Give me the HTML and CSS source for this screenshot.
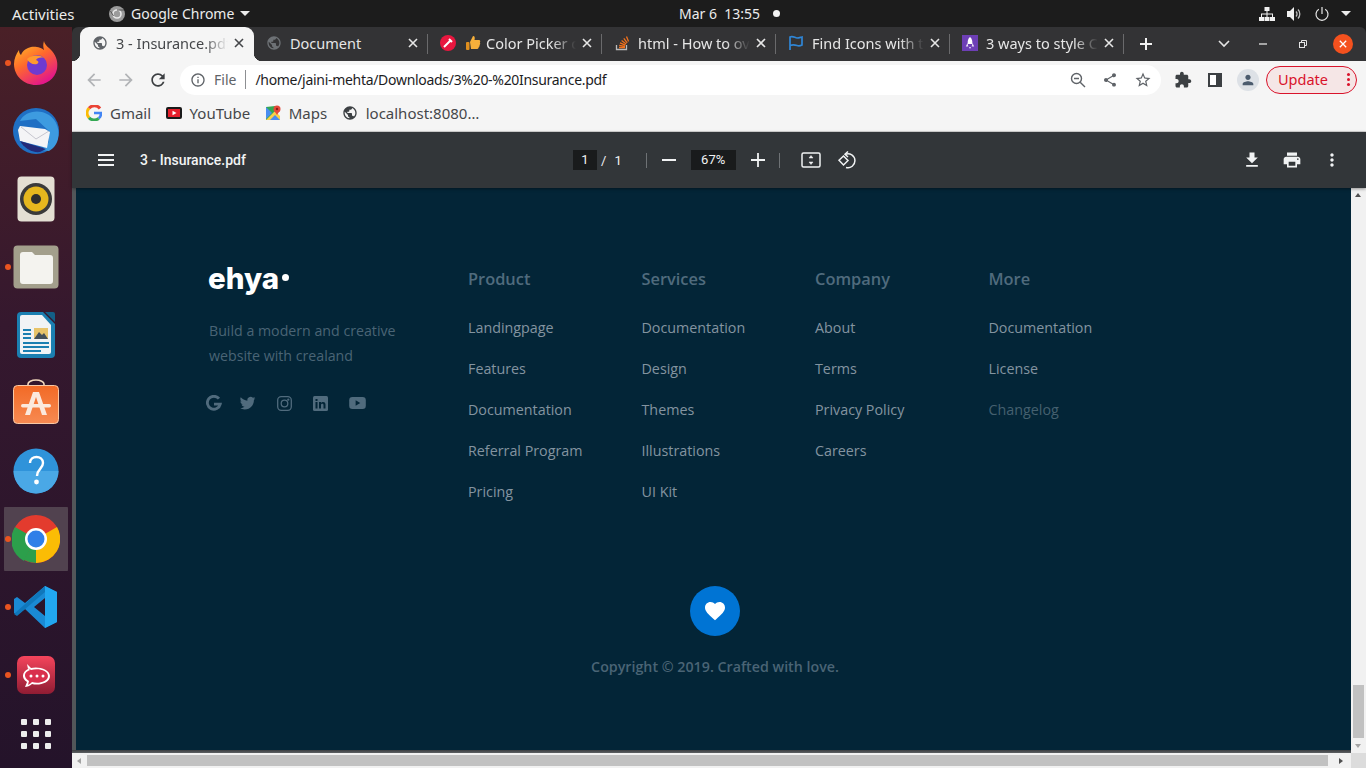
FILE: index.html
```html
<!DOCTYPE html>
<html>
<head>
	<meta charset="utf-8">
	<title>3 - Insurance.pdf</title>
	<link rel="stylesheet" href="styles.css">
</head>
<body>
	<!-- shared icons -->
	<svg class="sprite" width="0" height="0">
		<symbol id="globe" viewBox="0 0 24 24"><path d="M12 2C6.48 2 2 6.48 2 12s4.48 10 10 10 10-4.48 10-10S17.52 2 12 2zm-1 17.93c-3.95-.49-7-3.85-7-7.93 0-.62.08-1.21.21-1.79L9 15v1c0 1.1.9 2 2 2v1.93zm6.9-2.54c-.26-.81-1-1.39-1.9-1.39h-1v-3c0-.55-.45-1-1-1H8v-2h2c.55 0 1-.45 1-1V7h2c1.1 0 2-.9 2-2v-.41c2.93 1.19 5 4.06 5 7.41 0 2.08-.8 3.97-2.1 5.39z"/></symbol>
		<symbol id="close" viewBox="0 0 10 10"><path d="M1 1l8 8M9 1l-8 8" fill="none" stroke="currentColor" stroke-width="1.6"/></symbol>
	</svg>

	<div class="screen">
		<!-- Gnome top bar -->
		<div class="topbar">
			<div class="top-left">
				<span class="activities">Activities</span>
				<span class="app-menu">
					<svg width="16" height="16" viewBox="0 0 16 16"><circle cx="8" cy="8" r="8" fill="#9b9b9b"/><circle cx="8" cy="8" r="4" fill="none" stroke="#e8e8e8" stroke-width="1.6"/><path d="M8 4h7M4.500 10l-3-5" stroke="#555" stroke-width="1"/></svg>
					Google Chrome
					<i class="caret"></i>
				</span>
			</div>
			<div class="clock">Mar 6&nbsp; 13:55 <i class="clock-dot"></i></div>
			<div class="top-right">
				<svg width="16" height="14" viewBox="0 0 16 14" fill="#f0f0f0"><rect x="5.500" y="0" width="5" height="4"/><rect x="0" y="10" width="5" height="4"/><rect x="5.500" y="10" width="5" height="4"/><rect x="11" y="10" width="5" height="4"/><path d="M7.500 4h1v2.500H14V10h-1V7.500H8.500V10h-1V7.500H3V10H2V6.500h5.500z"/></svg>
				<svg width="16" height="14" viewBox="0 0 16 14"><path d="M0 4h3l4-4v14l-4-4H0z" fill="#f0f0f0"/><path d="M9 4.500a3.500 3.500 0 0 1 0 5M11 2.500a6.500 6.500 0 0 1 0 9" fill="none" stroke="#bdbdbd" stroke-width="1.300"/></svg>
				<svg width="14" height="14" viewBox="0 0 14 14" fill="none" stroke="#e8e8e8" stroke-width="1.200"><path d="M7 0v7"/><path d="M3.800 2.200a6 6 0 1 0 6.400 0"/></svg>
				<i class="caret"></i>
			</div>
		</div>

		<div class="desktop">
			<!-- Ubuntu dock -->
			<div class="dock">
				<div class="dock-item running">
					<svg width="46" height="46" viewBox="0 0 46 46">
						<defs>
							<linearGradient id="fx" x1="0" y1="0" x2="0.6" y2="1"><stop offset="0" stop-color="#ffc928"/><stop offset="0.5" stop-color="#ff6a2b"/><stop offset="1" stop-color="#e3178a"/></linearGradient>
						</defs>
						<path d="M31 1c1 5 5 6 8 10 5 6 6 12 5 18-2 10-11 16-21 16C11 45 1 36 1 24c0-5 2-10 5-14 0 3 1 4 2 5 2-5 6-7 10-8 5-1 11 1 13 3-1-3-1-6 0-9z" fill="url(#fx)"/>
						<circle cx="24" cy="25" r="10" fill="#6f3ad0"/>
						<path d="M14 19c4-4 12-5 17-1-4-1-7 0-8 2 3 1 3 3 1 4-4 1-8-1-10-5z" fill="#ff9a2e"/>
					</svg>
				</div>
				<div class="dock-item">
					<svg width="48" height="48" viewBox="0 0 48 48">
						<circle cx="24" cy="24" r="23" fill="#1f6fc4"/>
						<path d="M8 14C12 5 26 1 37 8c8 5 11 16 9 24-1 5-5 10-9 12l-8-1 8-8V24L24 12z" fill="#3d9be0"/>
						<path d="M8 19l25 3 5 3-3 16-27-7-2-11z" fill="#f4f4f6"/>
						<path d="M9 20l15 12 13-8" fill="none" stroke="#b9b9c4" stroke-width="0.800"/>
						<path d="M8 34l26 8-6 3c-8 1-16-4-20-11z" fill="#232a78"/>
					</svg>
				</div>
				<div class="dock-item">
					<svg width="38" height="46" viewBox="0 0 38 46">
						<rect x="0.500" y="0.500" width="37" height="45" rx="4" fill="#e4dfd3"/>
						<circle cx="19" cy="23" r="16" fill="#3a3a3a"/>
						<circle cx="19" cy="23" r="12.500" fill="#e6b71e"/>
						<circle cx="19" cy="23" r="5" fill="#2e2e2e"/>
					</svg>
				</div>
				<div class="dock-item running">
					<svg width="46" height="44" viewBox="0 0 46 44">
						<rect x="0.500" y="0.500" width="45" height="43" rx="4" fill="#a39f8c"/>
						<path d="M7 10a3 3 0 0 1 3-3h9l3 3h15a3 3 0 0 1 3 3v23a3 3 0 0 1-3 3H10a3 3 0 0 1-3-3z" fill="#f4f3ef"/>
					</svg>
				</div>
				<div class="dock-item">
					<svg width="38" height="46" viewBox="0 0 38 46">
						<path d="M4 0h22l12 12v30a4 4 0 0 1-4 4H4a4 4 0 0 1-4-4V4a4 4 0 0 1 4-4z" fill="#1b7fb1"/>
						<path d="M5 3h20l9 10v27a2 2 0 0 1-2 2H5a2 2 0 0 1-2-2V5a2 2 0 0 1 2-2z" fill="#f1f3f5"/>
						<path d="M28 0l10 10V2a2 2 0 0 0-2-2z" fill="#135f87"/>
						<path d="M6 17h8v2H6zm0 4h8v2H6zm0 4h8v2H6zm0 5h26v2H6zm0 4h26v2H6zm0 4h18v2H6z" fill="#1b7fb1"/>
						<rect x="17" y="16" width="14" height="11" fill="#e8c46a"/>
						<path d="M17 27l5-7 3 3 2-2 4 6z" fill="#43505a"/>
					</svg>
				</div>
				<div class="dock-item">
					<svg width="46" height="48" viewBox="0 2 46 48">
						<defs>
							<linearGradient id="soft" x1="0" y1="0" x2="0" y2="1"><stop offset="0" stop-color="#f26a26"/><stop offset="1" stop-color="#f78a52"/></linearGradient>
						</defs>
						<path d="M15 9V7a8 4 0 0 1 16 0v2" fill="none" stroke="#f3d9bd" stroke-width="1.600"/>
						<rect x="0.500" y="8.500" width="45" height="38" rx="4" fill="url(#soft)" stroke="#f8c9a6" stroke-width="1"/>
						<path d="M20 15h6l8 23h-5l-6-18-6 18h-5z" fill="#fbe9dd"/>
						<rect x="8" y="27" width="30" height="3.500" rx="1.700" fill="#fbe9dd"/>
					</svg>
				</div>
				<div class="dock-item">
					<svg width="46" height="46" viewBox="0 0 46 46">
						<circle cx="23" cy="23" r="22.500" fill="#2f93da"/>
						<path d="M.5 23a22.500 22.500 0 0 0 45 0z" fill="#4aa8e6"/>
						<path d="M17 15c0-8 13-8 13 0 0 6-6 6-6 13" fill="none" stroke="#fff" stroke-width="2.400"/>
						<circle cx="23.500" cy="34" r="2.400" fill="#fff"/>
					</svg>
				</div>
				<div class="dock-item running active">
					<svg width="48" height="48" viewBox="0 0 48 48">
						<circle cx="24" cy="24" r="24" fill="#e33b2e"/>
						<path d="M24 24L45 12a24 24 0 0 1-21 36z" fill="#fbbc05"/>
						<path d="M24 24l-12 22A24 24 0 0 1 3 12z" fill="#2c9f4b"/>
						<path d="M24 24L24 48a24 24 0 0 1-12-3.200z" fill="#2c9f4b"/>
						<circle cx="24" cy="24" r="11" fill="#fff"/>
						<circle cx="24" cy="24" r="8.500" fill="#2f7fe8"/>
					</svg>
				</div>
				<div class="dock-item running">
					<svg width="44" height="44" viewBox="0 0 44 44">
						<path d="M31 1l12 6v30l-12 6-20-19-8 6-3-2v-14l3-2 8 6zm0 12L20 22l11 9z" fill="#1a8ad4"/>
						<path d="M31 1l12 6v30l-12 6z" fill="#22a7f0"/>
						<path d="M0 29l3 2 28-24V1z" fill="#0f77bb"/>
					</svg>
				</div>
				<div class="dock-item running">
					<svg width="38" height="38" viewBox="0 0 38 38">
						<defs>
							<linearGradient id="rc" x1="0" y1="0" x2="0" y2="1"><stop offset="0" stop-color="#f5455c"/><stop offset="1" stop-color="#8f1c33"/></linearGradient>
						</defs>
						<rect width="38" height="38" rx="7" fill="url(#rc)"/>
						<path d="M10 8l4 4c7-2 19 1 19 8s-11 10-18 8c-2 2-5 3-7 3l2-5c-6-4-5-10 1-13z" fill="#fff"/>
						<path d="M11 12l3 2c7-2 17 0 17 6s-10 8-16 6c-2 2-3 2-4 3l1-4c-6-4-5-9 1-11z" fill="#d9304d"/>
						<circle cx="14" cy="20" r="1.500" fill="#fff"/><circle cx="20" cy="20" r="1.500" fill="#fff"/><circle cx="26" cy="20" r="1.500" fill="#fff"/>
					</svg>
				</div>
				<div class="dock-grid">
					<i></i><i></i><i></i><i></i><i></i><i></i><i></i><i></i><i></i>
				</div>
			</div>

			<div class="window">
				<!-- Tabs -->
				<div class="tabstrip">
					<div class="tab active">
						<svg class="fav" width="16" height="16" fill="#5f6368"><use href="#globe"/></svg>
						<span class="tab-title">3 - Insurance.pdf</span>
						<svg class="tab-x" width="10" height="10"><use href="#close"/></svg>
					</div>
					<div class="tab">
						<svg class="fav" width="16" height="16" fill="#6d7175"><use href="#globe"/></svg>
						<span class="tab-title">Document</span>
						<svg class="tab-x" width="10" height="10"><use href="#close"/></svg>
					</div>
					<div class="tab">
						<svg class="fav" width="16" height="16" viewBox="0 0 16 16"><circle cx="8" cy="8" r="8" fill="#e8173f"/><path d="M4 12l6-6M9 4l3 3" stroke="#fff" stroke-width="2"/></svg>
						<svg class="thumb" width="16" height="16" viewBox="0 0 16 16"><path d="M5 7l3-6c2 0 2 2 1.500 4H14c1.500 0 1.500 2 .8 2.500.7.800.5 2-.3 2.500.4.800 0 1.800-.8 2.100.2 1-.5 1.900-1.500 1.900H6z" fill="#f7b03b"/><rect x="1" y="7" width="3.500" height="8" rx="1" fill="#e08f1e"/></svg>
						<span class="tab-title">Color Picker o</span>
						<svg class="tab-x" width="10" height="10"><use href="#close"/></svg>
					</div>
					<div class="tab">
						<svg class="fav" width="16" height="16" viewBox="0 0 16 16" fill="none"><path d="M2.500 10v4.500h10V10" stroke="#bcbbbb" stroke-width="1.300"/><path d="M5 12.500h6M5.200 10.300l5.800 1.100M6 7.800l5.400 2.400M7.600 5.400l4.600 3.500M9.800 3.300l3.400 4.500M12.500 1.500l2 5" stroke="#f2711c" stroke-width="1.300"/></svg>
						<span class="tab-title">html - How to ov</span>
						<svg class="tab-x" width="10" height="10"><use href="#close"/></svg>
					</div>
					<div class="tab">
						<svg class="fav" width="16" height="16" viewBox="0 0 16 16" fill="none" stroke="#2f86d6" stroke-width="1.700"><path d="M2 15V2c3-1.500 5 1 7 1s3-.5 5-1v8c-2 1-3.500 1-5 .5S4.500 9.500 2 10.500"/></svg>
						<span class="tab-title">Find Icons with t</span>
						<svg class="tab-x" width="10" height="10"><use href="#close"/></svg>
					</div>
					<div class="tab tab-end">
						<svg class="fav" width="16" height="16" viewBox="0 0 16 16"><rect width="16" height="16" fill="#6d3fb5"/><path d="M8 2c2 1.500 2.500 4 2.300 7H5.700C5.500 6 6 3.500 8 2z" fill="#fff"/><path d="M5.500 8L3.800 11.500h2.500zM10.500 8l1.700 3.500H9.700zM7 12h2l-1 2z" fill="#eadff7"/></svg>
						<span class="tab-title">3 ways to style C</span>
						<svg class="tab-x" width="10" height="10"><use href="#close"/></svg>
					</div>
					<svg class="newtab" width="12" height="12" viewBox="0 0 12 12"><path d="M6 0v12M0 6h12" stroke="#f2f2f2" stroke-width="2"/></svg>
					<div class="win-controls">
						<svg width="12" height="8" viewBox="0 0 12 8" fill="none" stroke="#e4e4e4" stroke-width="1.600"><path d="M1 1l5 5 5-5"/></svg>
						<svg class="win-min" width="8" height="2" viewBox="0 0 8 2"><path d="M0 1h8" stroke="#e4e4e4" stroke-width="1.300"/></svg>
						<svg class="win-max" width="8" height="8" viewBox="0 0 8 8" fill="none" stroke="#e4e4e4"><rect x="0.500" y="2.500" width="5" height="5"/><path d="M2.500 2.500v-2h5v5h-2"/></svg>
						<span class="win-close"><svg width="8" height="8"><use href="#close"/></svg></span>
					</div>
				</div>

				<!-- Toolbar -->
				<div class="toolbar">
					<svg class="nav-icon" width="20" height="20" viewBox="0 0 24 24" fill="#b1b3b6"><path d="M20 11H7.830l5.590-5.590L12 4l-8 8 8 8 1.410-1.410L7.830 13H20v-2z"/></svg>
					<svg class="nav-icon" width="20" height="20" viewBox="0 0 24 24" fill="#b1b3b6"><path d="M12 4l-1.410 1.410L16.170 11H4v2h12.170l-5.580 5.590L12 20l8-8z"/></svg>
					<svg class="nav-icon" width="20" height="20" viewBox="0 0 24 24" fill="#3c3f42"><path d="M17.650 6.350C16.200 4.900 14.210 4 12 4c-4.420 0-7.990 3.580-7.990 8s3.570 8 7.990 8c3.730 0 6.840-2.550 7.730-6h-2.080c-.82 2.330-3.040 4-5.650 4-3.310 0-6-2.690-6-6s2.690-6 6-6c1.660 0 3.140.69 4.220 1.780L13 11h7V4l-2.350 2.350z"/></svg>
					<div class="omnibox">
						<svg width="16" height="16" viewBox="0 0 24 24" fill="#5f6368"><path d="M11 7h2v2h-2zm0 4h2v6h-2zm1-9C6.480 2 2 6.480 2 12s4.480 10 10 10 10-4.480 10-10S17.520 2 12 2zm0 18c-4.410 0-8-3.590-8-8s3.590-8 8-8 8 3.590 8 8-3.590 8-8 8z"/></svg>
						<span class="scheme">File</span>
						<span class="url">/home/jaini-mehta/Downloads/3%20-%20Insurance.pdf</span>
						<div class="omni-icons">
							<svg width="16" height="16" viewBox="0 0 16 16" fill="none" stroke="#5f6368" stroke-width="1.400"><circle cx="6.500" cy="6.500" r="5"/><path d="M10.200 10.200L15 15M4 6.500h5"/></svg>
							<svg width="16" height="16" viewBox="0 0 24 24" fill="#5f6368"><path d="M18 16.080c-.76 0-1.440.3-1.960.77L8.910 12.700c.05-.23.09-.46.09-.7s-.04-.47-.09-.7l7.050-4.110c.54.5 1.250.81 2.040.81 1.660 0 3-1.340 3-3s-1.340-3-3-3-3 1.340-3 3c0 .24.04.47.09.7L8.040 9.810C7.500 9.310 6.790 9 6 9c-1.660 0-3 1.340-3 3s1.340 3 3 3c.79 0 1.500-.31 2.040-.81l7.120 4.160c-.05.21-.08.43-.08.65 0 1.610 1.310 2.920 2.920 2.920 1.610 0 2.920-1.310 2.920-2.920s-1.310-2.920-2.920-2.920z"/></svg>
							<svg width="18" height="18" viewBox="0 0 24 24" fill="#5f6368"><path d="M22 9.240l-7.190-.62L12 2 9.190 8.630 2 9.240l5.460 4.730L5.820 21 12 17.270 18.180 21l-1.630-7.030L22 9.240zM12 15.400l-3.760 2.270 1-4.280-3.320-2.880 4.380-.38L12 6.100l1.710 4.040 4.380.38-3.320 2.880 1 4.280L12 15.400z"/></svg>
						</div>
					</div>
					<svg class="ext" width="18" height="18" viewBox="0 0 24 24" fill="#3c4043"><path d="M20.500 11H19V7c0-1.100-.9-2-2-2h-4V3.500C13 2.120 11.880 1 10.500 1S8 2.120 8 3.500V5H4c-1.100 0-1.990.9-1.990 2v3.800H3.500c1.490 0 2.700 1.210 2.700 2.700s-1.210 2.700-2.700 2.700H2V20c0 1.100.9 2 2 2h3.800v-1.500c0-1.490 1.210-2.700 2.700-2.700 1.490 0 2.700 1.210 2.700 2.700V22H17c1.100 0 2-.9 2-2v-4h1.500c1.380 0 2.500-1.120 2.500-2.500S21.880 11 20.500 11z"/></svg>
					<svg class="side" width="14" height="14" viewBox="0 0 14 14"><rect x="1" y="1" width="12" height="12" fill="#fff" stroke="#3c4043" stroke-width="2"/><rect x="8" y="1" width="5" height="12" fill="#3c4043"/></svg>
					<span class="avatar"><svg width="16" height="16" viewBox="0 0 24 24" fill="#4c5c6e"><path d="M12 12c2.210 0 4-1.790 4-4s-1.790-4-4-4-4 1.790-4 4 1.790 4 4 4zm0 2c-2.670 0-8 1.340-8 4v2h16v-2c0-2.660-5.330-4-8-4z"/></svg></span>
					<span class="update">Update <i class="update-dots"></i></span>
				</div>

				<!-- Bookmarks -->
				<div class="bookmarks">
					<span class="bookmark">
						<svg width="16" height="16" viewBox="0 0 16 16" fill="none" stroke-width="3"><path d="M14 3.500A7 7 0 0 0 3 3.300" stroke="#ea4335"/><path d="M3 3.300a7 7 0 0 0 0 9.400" stroke="#fbbc05"/><path d="M3 12.700a7 7 0 0 0 9.700.6" stroke="#34a853"/><path d="M12.700 13.300A6.500 6.500 0 0 0 15 8H8" stroke="#4285f4" stroke-width="2.600"/></svg>
						Gmail
					</span>
					<span class="bookmark">
						<svg width="16" height="12" viewBox="0 0 16 12"><rect width="16" height="12" rx="2" fill="#1a1a1a"/><rect x="2" y="2" width="12" height="8" fill="#e5202c"/><path d="M6.500 3.800L10.500 6l-4 2.200z" fill="#fff"/></svg>
						YouTube
					</span>
					<span class="bookmark">
						<svg width="16" height="16" viewBox="0 0 16 16"><path d="M1 2l9-1v14H1z" fill="#34a853"/><path d="M1 15L10 6l5 5v4z" fill="#f9d04a"/><path d="M1 2l6 6-6 6z" fill="#4a8df0"/><path d="M5 15l5-5 5 5z" fill="#4a8df0"/><circle cx="12" cy="4" r="3.500" fill="#e5493a"/><path d="M9.500 6l2.500 4 2.500-4z" fill="#e5493a"/><circle cx="12" cy="4" r="1.200" fill="#8f1c16"/></svg>
						Maps
					</span>
					<span class="bookmark">
						<svg width="16" height="16" fill="#3c4043"><use href="#globe"/></svg>
						localhost:8080…
					</span>
				</div>

				<!-- PDF viewer toolbar -->
				<div class="pdfbar">
					<div class="pdf-left">
						<svg width="16" height="12" viewBox="0 0 16 12" fill="#f1f3f4"><rect width="16" height="2"/><rect y="5" width="16" height="2"/><rect y="10" width="16" height="2"/></svg>
						<span class="pdf-title">3 - Insurance.pdf</span>
					</div>
					<div class="pdf-center">
						<span class="pdf-page">1</span>
						<span class="pdf-of">/</span>
						<span class="pdf-total">1</span>
						<i class="pdf-sep"></i>
						<svg width="14" height="14" viewBox="0 0 14 14"><path d="M0 7h14" stroke="#f1f3f4" stroke-width="2"/></svg>
						<span class="pdf-zoom">67%</span>
						<svg width="14" height="14" viewBox="0 0 14 14"><path d="M0 7h14M7 0v14" stroke="#f1f3f4" stroke-width="1.800"/></svg>
						<i class="pdf-sep pdf-sep-last"></i>
						<svg class="pdf-fit" width="20" height="16" viewBox="0 0 20 16" fill="none" stroke="#f1f3f4" stroke-width="1.500"><rect x="1" y="1" width="18" height="14" rx="1.500"/><path d="M8 6l2-2.500L12 6zM8 10l2 2.500 2-2.500z" fill="#f1f3f4" stroke-width="0.500"/></svg>
						<svg class="pdf-rotate" width="18" height="18" viewBox="0 0 18 18" fill="none" stroke="#f1f3f4" stroke-width="1.500"><path d="M1 9.200l4.500-4.200 4.500 4.500-4.500 4.500z"/><path d="M7.500 3.200a7 7 0 1 1 .5 13.300"/><path d="M10 .5L7 3.300l3 2.700"/></svg>
					</div>
					<div class="pdf-right">
						<svg width="20" height="20" viewBox="0 0 24 24" fill="#f1f3f4"><path d="M19 9h-4V3H9v6H5l7 7 7-7zM5 18v2h14v-2H5z"/></svg>
						<svg width="20" height="20" viewBox="0 0 24 24" fill="#f1f3f4"><path d="M19 8H5c-1.660 0-3 1.340-3 3v6h4v4h12v-4h4v-6c0-1.660-1.340-3-3-3zm-3 11H8v-5h8v5zm3-7c-.55 0-1-.45-1-1s.45-1 1-1 1 .45 1 1-.45 1-1 1zm-1-9H6v4h12V3z"/></svg>
						<svg width="20" height="20" viewBox="0 0 24 24" fill="#f1f3f4"><path d="M12 8c1.100 0 2-.9 2-2s-.9-2-2-2-2 .9-2 2 .9 2 2 2zm0 2c-1.100 0-2 .9-2 2s.9 2 2 2 2-.9 2-2-.9-2-2-2zm0 6c-1.100 0-2 .9-2 2s.9 2 2 2 2-.9 2-2-.9-2-2-2z"/></svg>
					</div>
				</div>

				<!-- The pdf page -->
				<div class="viewer">
					<div class="gutter">
						<div class="page">
							<div class="page-columns">
								<div class="brand">
									<div class="logo">ehya<i class="logo-dot"></i></div>
									<p class="brand-text">Build a modern and creative website with crealand</p>
									<div class="social">
										<svg width="16" height="16" viewBox="0 0 18 18" fill="none" stroke="#506b7d" stroke-width="3.200"><path d="M14.600 4.200A7.300 7.300 0 1 0 16 10.300H9"/></svg>
										<svg class="social-bird" width="17" height="15" viewBox="0 0 24 22" fill="#506b7d"><path d="M23.500 3.300c-.8.400-1.700.6-2.700.8 1-.6 1.700-1.500 2.100-2.600-.9.500-1.900.9-3 1.100a4.700 4.700 0 0 0-8 4.300C8 6.700 4.500 4.800 2.100 2c-1.200 2.100-.6 4.900 1.500 6.300-.8 0-1.500-.2-2.100-.6 0 2.300 1.600 4.200 3.800 4.700-.7.200-1.400.2-2.100.1.600 1.900 2.300 3.200 4.400 3.300A9.500 9.500 0 0 1 .6 17.700a13.400 13.400 0 0 0 7.300 2.100c8.800 0 13.800-7.400 13.500-14.100.9-.7 1.700-1.500 2.100-2.400z"/></svg>
										<svg width="15" height="15" viewBox="0 0 15 15" fill="none" stroke="#506b7d" stroke-width="1.300"><rect x="0.700" y="0.700" width="13.600" height="13.600" rx="3.500"/><circle cx="7.500" cy="7.500" r="3.300"/><circle cx="11.300" cy="3.700" r="0.500"/></svg>
										<svg width="15" height="15" viewBox="0 0 15 15"><rect width="15" height="15" rx="1.500" fill="#506b7d"/><path d="M2.500 6h2v6.500h-2zM2.500 3h2v2h-2zM6 6h2v1c1-1.500 4.500-1.700 4.500 1.500v4h-2V9c0-1.600-2.500-1.600-2.500 0v3.500H6z" fill="#032537"/></svg>
										<svg width="17" height="12" viewBox="0 0 18 13"><rect width="18" height="13" rx="3.500" fill="#506b7d"/><path d="M7 3.500l5 3-5 3z" fill="#032537"/></svg>
									</div>
								</div>
								<div class="link-col">
									<h4>Product</h4>
									<ul>
										<li>Landingpage</li>
										<li>Features</li>
										<li>Documentation</li>
										<li>Referral Program</li>
										<li>Pricing</li>
									</ul>
								</div>
								<div class="link-col">
									<h4>Services</h4>
									<ul>
										<li>Documentation</li>
										<li>Design</li>
										<li>Themes</li>
										<li>Illustrations</li>
										<li>UI Kit</li>
									</ul>
								</div>
								<div class="link-col">
									<h4>Company</h4>
									<ul>
										<li>About</li>
										<li>Terms</li>
										<li>Privacy Policy</li>
										<li>Careers</li>
									</ul>
								</div>
								<div class="link-col">
									<h4>More</h4>
									<ul>
										<li>Documentation</li>
										<li>License</li>
										<li class="dim">Changelog</li>
									</ul>
								</div>
							</div>
							<div class="love">
								<span class="love-badge">
									<svg width="24" height="24" viewBox="0 0 24 24" fill="#fff"><path d="M12 21.350l-1.450-1.320C5.400 15.360 2 12.280 2 8.500 2 5.420 4.420 3 7.500 3c1.740 0 3.410.81 4.500 2.090C13.090 3.810 14.760 3 16.500 3 19.580 3 22 5.420 22 8.500c0 3.780-3.400 6.860-8.550 11.540L12 21.350z"/></svg>
								</span>
								<p class="copyright">Copyright © 2019. Crafted with love.</p>
							</div>
						</div>
					</div>
					<div class="vscroll">
						<i class="arrow-up"></i>
						<i class="vthumb"></i>
						<i class="arrow-down"></i>
					</div>
				</div>
				<div class="hscroll">
					<i class="arrow-left"></i>
					<i class="hthumb"></i>
					<i class="arrow-right"></i>
					<i class="corner"></i>
				</div>
			</div>
		</div>
	</div>
</body>
</html>
```

FILE: styles.css
```css
* {
	box-sizing: border-box;
}

body {
	margin: 0;
	font-family: "Noto Sans", sans-serif;
	background-color: #1c1c1c;
	overflow: hidden;
}

i {
	display: block;
}

svg {
	display: block;
	flex: none;
}

.sprite {
	position: absolute;
}

.screen {
	width: 1366px;
	height: 768px;
	display: flex;
	flex-direction: column;
	overflow: hidden;
}

/*Top bar*/
.topbar {
	height: 27px;
	flex: none;
	display: flex;
	align-items: center;
	position: relative;
	background-color: #1c1c1c;
	color: #ececec;
	font-size: 14px;
}

.top-left {
	display: flex;
	align-items: center;
	padding-left: 12px;
}

.activities {
	width: 97px;
	font-size: 15px;
}

.app-menu {
	display: flex;
	align-items: center;
	gap: 6px;
}

.caret {
	width: 0;
	height: 0;
	border-left: 5px solid transparent;
	border-right: 5px solid transparent;
	border-top: 5px solid #ececec;
}

.clock {
	position: absolute;
	left: 679px;
	top: 0;
	height: 27px;
	display: flex;
	align-items: center;
	gap: 9px;
	white-space: pre;
}

.clock-dot {
	width: 7px;
	height: 7px;
	border-radius: 50%;
	background-color: #f2f2f2;
}

.top-right {
	margin-left: auto;
	display: flex;
	align-items: center;
	gap: 12px;
	padding-right: 15px;
}

/*Dock and window*/
.desktop {
	flex: 1;
	min-height: 0;
	display: flex;
}

.dock {
	width: 72px;
	flex: none;
	padding-top: 2px;
	display: flex;
	flex-direction: column;
	background: linear-gradient(#4a2027, #35182e 40%, #24132a);
}

.dock-item {
	height: 68px;
	width: 64px;
	margin-left: 4px;
	flex: none;
	display: flex;
	align-items: center;
	justify-content: center;
	position: relative;
}

.dock-item.active {
	background: linear-gradient(#51424f, #51424f) center / 100% 64px no-repeat;
	border-radius: 4px;
}

.dock-item.running::before {
	content: "";
	position: absolute;
	left: 1px;
	top: 31px;
	width: 6px;
	height: 6px;
	border-radius: 50%;
	background-color: #e95420;
}

.dock-grid {
	display: grid;
	grid-template-columns: repeat(3, 6px);
	gap: 6px;
	margin: 10px 0 0 21px;
}

.dock-grid i {
	height: 6px;
	border-radius: 1px;
	background-color: #ededed;
}

.window {
	flex: 1;
	min-width: 0;
	display: flex;
	flex-direction: column;
}

/*Tabs*/
.tabstrip {
	height: 34px;
	flex: none;
	display: flex;
	align-items: center;
	padding-left: 8px;
	background-color: #333335;
	border-radius: 6px 6px 0 0;
}

.tab {
	width: 174px;
	height: 34px;
	flex: none;
	display: flex;
	align-items: center;
	padding: 0 10px 2px 12px;
	position: relative;
	color: #e6e6e6;
	font-size: 14.5px;
}

.tab:not(.active):not(:nth-child(2))::before {
	content: "";
	position: absolute;
	left: -1px;
	top: 7px;
	width: 1px;
	height: 20px;
	background-color: #6a6a6c;
}

.tab-end::after {
	content: "";
	position: absolute;
	right: 0;
	top: 7px;
	width: 1px;
	height: 20px;
	background-color: #6a6a6c;
}

.tab.active {
	background-color: #f5f5f5;
	color: #45474a;
	border-radius: 9px 9px 0 0;
}

/*Flared feet of the open tab*/
.tab.active::before,
.tab.active::after {
	content: "";
	position: absolute;
	bottom: 0;
	width: 8px;
	height: 8px;
}

.tab.active::before {
	left: -8px;
	background: radial-gradient(circle at 0 0, transparent 8px, #f5f5f5 8.5px);
}

.tab.active::after {
	right: -8px;
	background: radial-gradient(circle at 100% 0, transparent 8px, #f5f5f5 8.5px);
}

.fav {
	margin-right: 8px;
}

.thumb {
	margin: 0 5px 0 1px;
}

.tab-title {
	flex: 1;
	min-width: 0;
	white-space: nowrap;
	-webkit-mask-image: linear-gradient(to left, transparent, #000 24px);
	mask-image: linear-gradient(to left, transparent, #000 24px);
}

.tab:nth-child(2) .tab-title {
	-webkit-mask-image: none;
	mask-image: none;
}

.tab-x {
	margin-left: 6px;
}

.newtab {
	margin-left: 16px;
}

.win-controls {
	margin-left: auto;
	display: flex;
	align-items: center;
	padding-right: 13px;
}

.win-min {
	margin-left: 29px;
}

.win-max {
	margin-left: 32px;
}

.win-close {
	width: 20px;
	height: 20px;
	margin-left: 26px;
	border-radius: 50%;
	display: flex;
	align-items: center;
	justify-content: center;
	background-color: #f4511e;
	color: #fff;
}

/*Toolbar*/
.toolbar {
	height: 37px;
	flex: none;
	display: flex;
	align-items: center;
	padding-left: 12px;
	background-color: #f5f5f5;
}

.nav-icon {
	margin-right: 12px;
}

.omnibox {
	width: 981px;
	height: 30px;
	flex: none;
	display: flex;
	align-items: center;
	padding: 0 9px 0 10px;
	border-radius: 15px;
	background-color: #fff;
	font-size: 14px;
}

.scheme {
	margin-left: 8px;
	padding-right: 9px;
	color: #5f6368;
	border-right: 1px solid #8d8f92;
	line-height: 19px;
}

.url {
	margin-left: 9px;
	color: #1d1d1f;
	letter-spacing: -0.3px;
}

.omni-icons {
	margin-left: auto;
	display: flex;
	align-items: center;
	gap: 16px;
}

.ext {
	margin-left: 13px;
}

.side {
	margin-left: 16px;
}

.avatar {
	width: 22px;
	height: 22px;
	margin-left: 15px;
	border-radius: 50%;
	display: flex;
	align-items: center;
	justify-content: center;
	background-color: #dde1e6;
}

.update {
	width: 91px;
	height: 28px;
	margin-left: 7px;
	display: flex;
	align-items: center;
	padding: 0 0 1px 11px;
	gap: 19px;
	border: 1px solid #d9132b;
	border-radius: 14px;
	background-color: #f5e6e6;
	color: #d9132b;
	font-size: 14.5px;
}

.update-dots {
	width: 3px;
	height: 3px;
	border-radius: 50%;
	background-color: #d9132b;
	box-shadow: 0 -5px 0 #d9132b, 0 5px 0 #d9132b;
}

/*Bookmarks*/
.bookmarks {
	height: 34px;
	flex: none;
	display: flex;
	align-items: center;
	padding: 0 0 3px 14px;
	gap: 14.5px;
	background-color: #f5f5f5;
	border-bottom: 1px solid #d6d6d6;
	color: #45474a;
	font-size: 15px;
}

.bookmark {
	display: flex;
	align-items: center;
	gap: 8px;
}

/*PDF toolbar*/
.pdfbar {
	height: 56px;
	flex: none;
	display: flex;
	align-items: center;
	background-color: #323639;
	color: #f1f3f4;
	font-family: Roboto, sans-serif;
	font-size: 13px;
	position: relative;
	z-index: 1;
	box-shadow: 0 1px 3px rgba(0, 0, 0, 0.4);
}

.pdf-left {
	width: 501px;
	flex: none;
	display: flex;
	align-items: center;
	padding-left: 26px;
}

.pdf-title {
	margin-left: 26px;
	font-size: 14px;
	font-weight: 500;
}

.pdf-center {
	display: flex;
	align-items: center;
}

.pdf-page {
	width: 24px;
	height: 20px;
	line-height: 20px;
	text-align: center;
	background-color: #191b1c;
}

.pdf-of {
	margin-left: 4px;
}

.pdf-total {
	margin-left: 8px;
}

.pdf-sep {
	width: 1px;
	height: 15px;
	margin: 0 15px 0 24px;
	background-color: #6e7275;
}

.pdf-sep-last {
	margin: 0 21px 0 14px;
}

.pdf-zoom {
	width: 45px;
	height: 20px;
	margin: 0 15px;
	line-height: 20px;
	text-align: center;
	background-color: #191b1c;
}

.pdf-rotate {
	margin-left: 17px;
}

.pdf-right {
	margin-left: auto;
	display: flex;
	align-items: center;
	gap: 20px;
	padding-right: 24px;
}

/*The pdf page*/
.viewer {
	flex: 1;
	min-height: 0;
	display: flex;
}

.gutter {
	flex: 1;
	min-width: 0;
	padding: 0 0 3px 4px;
	background: #525659 linear-gradient(transparent calc(100% - 3px), #3a3d40 calc(100% - 3px), #5d6063);
}

.page {
	height: 100%;
	padding: 80px 0 0 132px;
	background-color: #032537;
	font-family: "Open Sans", sans-serif;
}

.page-columns {
	display: flex;
}

.brand {
	width: 260px;
	flex: none;
}

.logo {
	display: flex;
	font-family: Inter, sans-serif;
	font-size: 29.5px;
	font-weight: 800;
	line-height: 20px;
	color: #fff;
}

.logo-dot {
	width: 7px;
	height: 7px;
	margin: 6px 0 0 3px;
	border-radius: 50%;
	background-color: #fff;
}

.brand-text {
	width: 205px;
	margin: 30px 0 0 1px;
	font-size: 14.2px;
	line-height: 25px;
	color: #4a6475;
}

.social {
	display: flex;
	align-items: center;
	gap: 21px;
	margin-top: 27px;
	margin-left: -2px;
}

.social-bird {
	margin-left: -4px;
}

.link-col {
	width: 173.500px;
	flex: none;
}

.link-col h4 {
	margin: 0 0 28px;
	font-size: 16.4px;
	font-weight: 600;
	line-height: 22px;
	color: #506b7d;
}

.link-col ul {
	margin: 0;
	padding: 0;
	list-style: none;
	font-size: 14.3px;
	line-height: 20px;
	color: #8394a0;
}

.link-col li {
	height: 41px;
}

.link-col li.dim {
	color: #45606f;
}

.love {
	display: flex;
	flex-direction: column;
	align-items: center;
	margin: 63px 0 0 -129px;
}

.love-badge {
	width: 50px;
	height: 50px;
	border-radius: 50%;
	display: flex;
	align-items: center;
	justify-content: center;
	background-color: #0074d4;
}

.copyright {
	margin: 21px 0 0;
	font-size: 14.25px;
	font-weight: 600;
	line-height: 20px;
	color: #4a6475;
}

/*Scrollbars*/
.vscroll {
	width: 15px;
	flex: none;
	position: relative;
	background-color: #f1f1f1;
}

.vthumb {
	position: absolute;
	left: 2px;
	bottom: 15px;
	width: 11px;
	height: 53px;
	background-color: #c1c1c1;
}

.arrow-up,
.arrow-down {
	position: absolute;
	left: 4px;
	width: 0;
	height: 0;
	border-left: 3.500px solid transparent;
	border-right: 3.500px solid transparent;
}

.arrow-up {
	top: 5px;
	border-bottom: 4px solid #505050;
}

.arrow-down {
	bottom: 5px;
	border-top: 4px solid #a3a3a3;
}

.hscroll {
	height: 15px;
	flex: none;
	display: flex;
	align-items: center;
	background-color: #f1f1f1;
}

.arrow-left,
.arrow-right {
	width: 0;
	height: 0;
	border-top: 3.500px solid transparent;
	border-bottom: 3.500px solid transparent;
}

.arrow-left {
	margin-left: 5px;
	border-right: 4px solid #a3a3a3;
}

.arrow-right {
	margin-left: 11px;
	border-left: 4px solid #505050;
}

.hthumb {
	width: 1241px;
	height: 11px;
	margin-left: 6px;
	background-color: #c1c1c1;
}

.corner {
	width: 15px;
	height: 15px;
	margin-left: auto;
	background-color: #dcdcdc;
}
```
